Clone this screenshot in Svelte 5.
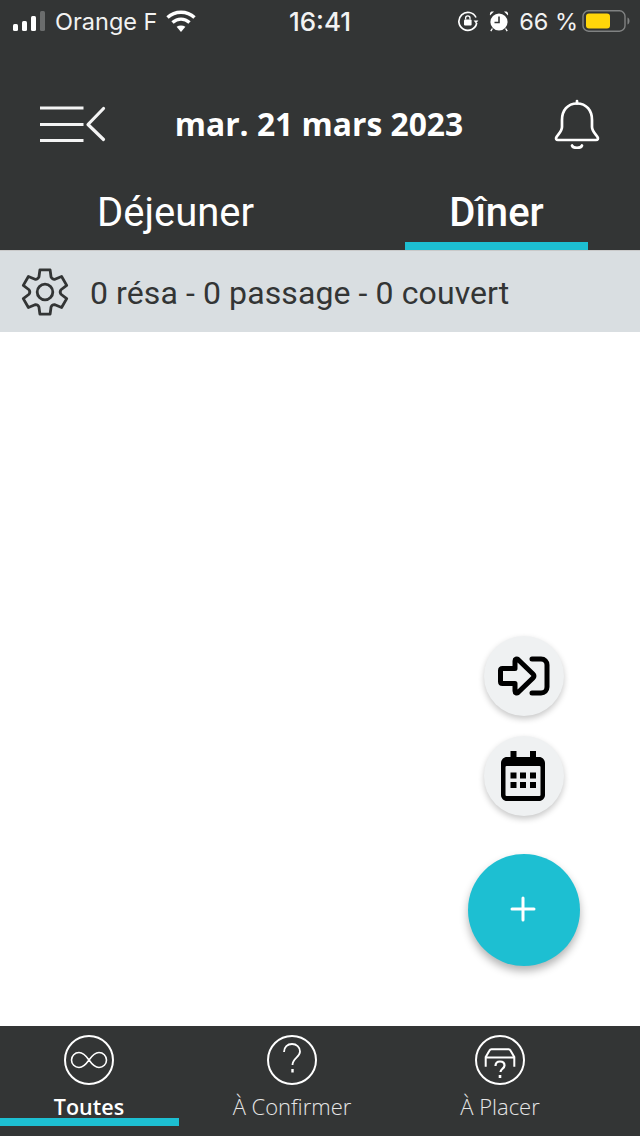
<script>
  const rad = (d) => (d * Math.PI) / 180;
  const pt = (r, d) => `${(24 + r * Math.cos(rad(d))).toFixed(2)} ${(24 + r * Math.sin(rad(d))).toFixed(2)}`;
  let gear = '';
  for (let i = 0; i < 6; i++) {
    const a = -90 + 60 * i;
    gear += `${i === 0 ? 'M' : 'L'}${pt(15.5, a - 22)}L${pt(21.8, a - 13)}L${pt(21.8, a + 13)}L${pt(15.5, a + 22)}Q${pt(13.8, a + 30)} ${pt(15.5, a + 38)}`;
  }
  gear += 'Z';
</script>

<div class="page">
  <header class="head">
    <div class="status">
      <div class="side">
        <svg class="signal" width="33" height="24" viewBox="0 0 33 24"><rect x="0" y="15" width="5" height="7" rx="1.5" fill="#fff"/><rect x="9" y="12" width="5" height="10" rx="1.5" fill="#fff"/><rect x="18" y="7" width="5" height="15" rx="1.5" fill="#fff"/><rect x="27" y="2" width="5" height="20" rx="1.5" fill="#6b6d6d"/></svg>
        <span class="carrier">Orange F</span>
        <svg class="wifi" width="30" height="24" viewBox="0 0 30 24" fill="none" stroke="#fff" stroke-width="3.4"><path d="M1.5 8.5C9 1.5 21 1.5 28.5 8.5"/><path d="M6.5 13.5C11.5 9 18.5 9 23.5 13.5"/><path d="M15 23l-4.4-5.2c2.6-1.8 6.2-1.8 8.8 0z" fill="#fff" stroke="none"/></svg>
      </div>
      <span class="clock">16:41</span>
      <div class="side right">
        <svg width="22" height="22" viewBox="0 0 22 22" fill="none" stroke="#fff" stroke-width="1.7"><path d="M19 7.5A9 9 0 1 0 19.7 13"/><path d="M16.6 10.5h4.8L19 13.4z" fill="#fff" stroke="none"/><rect x="7" y="9.5" width="7.6" height="6" rx="1" fill="#fff" stroke="none"/><path d="M8.6 9.5V8a2.2 2.2 0 0 1 4.4 0v1.5" stroke-width="1.3"/></svg>
        <svg class="alarm" width="20" height="22" viewBox="0 0 20 22"><circle cx="10" cy="12" r="8.6" fill="#fff"/><path d="M10 6.5V12.5H5.5" fill="none" stroke="#333535" stroke-width="1.6"/><path d="M1 5.5L5 1.6 2.6 1.4C1.2 1.6.6 3.6 1 5.5zM19 5.5L15 1.6l2.4-.2C18.8 1.6 19.4 3.6 19 5.5z" fill="#fff"/><path d="M3.4 18.5l-1.6 2.6M16.6 18.5l1.6 2.6" stroke="#fff" stroke-width="1.4"/></svg>
        <span class="pct">66 %</span>
        <svg class="battery" width="49" height="24" viewBox="0 0 49 24"><rect x="1" y="1.8" width="42" height="20.4" rx="5.500" fill="none" stroke="#808282" stroke-width="1.4"/><rect x="4" y="4.600" width="24" height="14.800" rx="3" fill="#ffd60a"/><path d="M45.500 8.500c1.500.6 2 2 2 3.500s-.5 2.900-2 3.500z" fill="#808282"/></svg>
      </div>
    </div>
    <div class="titlebar">
      <svg class="menu" width="66" height="36" viewBox="0 0 66 36" fill="none" stroke="#f4f4f4"><path d="M0 2h43.500M0 18.500h43.500M0 34.500h43.500" stroke-width="3.200"/><path d="M63.500 2.500L48 18.500 63.500 33.500" stroke-width="3.200" stroke-linecap="round" stroke-linejoin="round"/></svg>
      <h1>mar. 21 mars 2023</h1>
      <svg class="bell" width="46" height="52" viewBox="0 0 46 52" fill="none" stroke="#fff" stroke-width="2.700" stroke-linejoin="round" stroke-linecap="round"><path d="M23 5.500C13.500 5.500 8 12.500 8 22v7c0 4-3.500 7-5.500 10-1 1.500-.3 3 1.500 3h38c1.800 0 2.500-1.500 1.500-3-2-3-5.500-6-5.500-10v-7C38 12.500 32.500 5.500 23 5.500z"/><path d="M23 5.500V3"/><path d="M18 47.500c1 3 9 3 10 0"/></svg>
    </div>
    <nav class="tabs">
      <div class="tab">Déjeuner</div>
      <div class="tab active">Dîner</div>
    </nav>
  </header>
  <div class="info">
    <svg width="50" height="50" viewBox="0 0 48 48" fill="none" stroke="#333535" stroke-width="2.700" stroke-linecap="round" stroke-linejoin="round"><path d={gear}/><circle cx="24" cy="24" r="7.500"/></svg>
    <span>0 résa - 0 passage - 0 couvert</span>
  </div>
  <main class="content">
    <button class="fab small one" aria-label="Entrée">
      <svg width="52" height="40" viewBox="0 0 52 40" fill="none" stroke="#000" stroke-width="5" stroke-linejoin="round" stroke-linecap="round"><path d="M4.500 12.500H17V5c0-2 1.800-2.500 3-1.500L35 18c1.300 1.300 1.300 2.700 0 4L20 36.500c-1.200 1-3 .5-3-1.500v-7.500H4.500c-1.200 0-2-.8-2-2v-11c0-1.200.8-2 2-2z"/><path d="M34 3h9c3.500 0 6 2.500 6 6v22c0 3.500-2.500 6-6 6h-9"/></svg>
    </button>
    <button class="fab small two" aria-label="Calendrier">
      <svg width="44" height="50" viewBox="0 0 44 50"><path d="M9.500 0h6v6h13.500V0h6v6h3c3.300 0 6 2.700 6 6v32c0 3.300-2.700 6-6 6H6c-3.300 0-6-2.700-6-6V12c0-3.300 2.700-6 6-6h3.500z"/><rect x="4.500" y="15" width="35" height="30" rx="1" fill="#eff1f2"/><g><rect x="9.500" y="21.500" width="6" height="6"/><rect x="19" y="21.500" width="6" height="6"/><rect x="29" y="21.500" width="6" height="6"/><rect x="9.500" y="31" width="6" height="6"/><rect x="19" y="31" width="6" height="6"/><rect x="29" y="31" width="6" height="6"/></g></svg>
    </button>
    <button class="fab big" aria-label="Ajouter">
      <svg width="26" height="26" viewBox="0 0 26 26" stroke="#fff" stroke-width="3" stroke-linecap="round"><path d="M13 2v22M2 13h22"/></svg>
    </button>
  </main>
  <footer class="bottom">
    <div class="item on">
      <svg width="50" height="50" viewBox="0 0 50 50" fill="none" stroke="#fff"><circle cx="25" cy="25" r="24" stroke-width="2"/><path d="M25 25c-3.500-5-6.500-7.500-10-7.500a7.500 7.500 0 0 0 0 15c3.500 0 6.500-2.500 10-7.500s6.500-7.500 10-7.500a7.500 7.500 0 0 1 0 15c-3.500 0-6.500-2.500-10-7.500z" stroke-width="1.600"/></svg>
      <span>Toutes</span>
      <i class="bar"></i>
    </div>
    <div class="item">
      <svg width="50" height="50" viewBox="0 0 50 50" fill="none" stroke="#fff"><circle cx="25" cy="25" r="24" stroke-width="2"/><path d="M17 17c0-5 3.500-8 8-8s8 3 8 7.500c0 6-7.500 6.500-7.500 13.500" stroke-width="1.800"/><path d="M25.500 34v3.500" stroke-width="2.400"/></svg>
      <span>À Confirmer</span>
    </div>
    <div class="item">
      <svg width="50" height="50" viewBox="0 0 50 50" fill="none" stroke="#fff"><circle cx="25" cy="25" r="24" stroke-width="2"/><path d="M10.700 31.700V22L14.500 15.500c.5-1 1-1.200 2-1.200h17c1 0 1.500.2 2 1.200L39.300 22v9.700M10.700 22.500h28.600" stroke-width="2"/><path d="M20.500 31c0-3 2-4.500 4.500-4.500s4.500 1.500 4.500 4c0 3-4 3.500-4 6.500" stroke-width="2.200"/><path d="M25 40v3" stroke-width="2.600"/></svg>
      <span>À Placer</span>
    </div>
  </footer>
</div>

<style>
  :global(body) { margin: 0; background: #fff; }
  .page { width: 640px; height: 1136px; display: flex; flex-direction: column; overflow: hidden; color: #fff; font-family: "Open Sans", sans-serif; }
  .head { background: #333535; height: 250px; display: flex; flex-direction: column; }
  .status { height: 42px; padding: 0 9px 0 13px; display: grid; grid-template-columns: 1fr auto 1fr; align-items: center; font-family: Inter, sans-serif; font-size: 23.5px; color: #f2f2f2; box-sizing: border-box; }
  .side { display: flex; align-items: center; min-width: 0; }
  .side.right { justify-content: flex-end; }
  .carrier { margin: 0 8px 0 9px; }
  .clock { font-weight: 500; font-size: 26px; margin-right: 4px; }
  .alarm { margin-left: 10px; }
  .pct { margin: 0 4px 0 10px; }
  .titlebar { height: 84px; margin-top: 40px; padding: 0 40px; display: grid; grid-template-columns: 1fr auto 1fr; align-items: center; }
  .bell { justify-self: end; }
  .titlebar h1 { margin: 0 2px 0 0; font-size: 31.800px; font-weight: 700; line-height: 1; }
  .tabs { display: flex; gap: 138px; padding-left: 84px; height: 84px; }
  .tab { width: 183px; padding-top: 19px; text-align: center; font-family: Roboto, sans-serif; font-size: 40px; line-height: 56px; font-weight: 400; box-sizing: border-box; }
  .tab.active { font-weight: 500; border-bottom: 8px solid #1dbfd2; }
  .info { height: 82px; box-sizing: border-box; background: #d9dee1; border-top: 1px solid #c9c9c9; display: flex; align-items: center; gap: 20px; padding-left: 20px; font-family: Roboto, sans-serif; font-size: 32px; letter-spacing: .1px; color: #333535; }
  .info span { padding-top: 2px; }
  .content { flex: 1; position: relative; background: #fff; }
  .fab { position: absolute; border: 0; padding: 0; border-radius: 50%; display: flex; align-items: center; justify-content: center; }
  .small { width: 80px; height: 80px; left: 484px; background: #eff1f2; box-shadow: 0 3px 6px rgba(0,0,0,.22); }
  .one { top: 304px; }
  .two { top: 404px; }
  .two svg { margin-right: 3px; }
  .big { width: 112px; height: 112px; left: 468px; top: 522px; background: #1dbfd2; box-shadow: 0 5px 8px rgba(0,0,0,.3); }
  .big svg { margin: 0 2px 2px 0; }
  .bottom { height: 110px; background: #333535; display: grid; grid-template-columns: 179px 226px 190px; font-size: 22px; }
  .item { position: relative; display: flex; flex-direction: column; align-items: center; padding-top: 9px; font-weight: 300; color: #e6e6e6; line-height: 30px; }
  .item span { margin-top: 6px; }
  .item.on { font-weight: 600; font-size: 21.500px; color: #fff; padding-right: 1px; }
  .item.on span { margin-top: 7px; }
  .bar { position: absolute; left: 0; right: 0; top: 92px; height: 8px; background: #1dbfd2; }
</style>
